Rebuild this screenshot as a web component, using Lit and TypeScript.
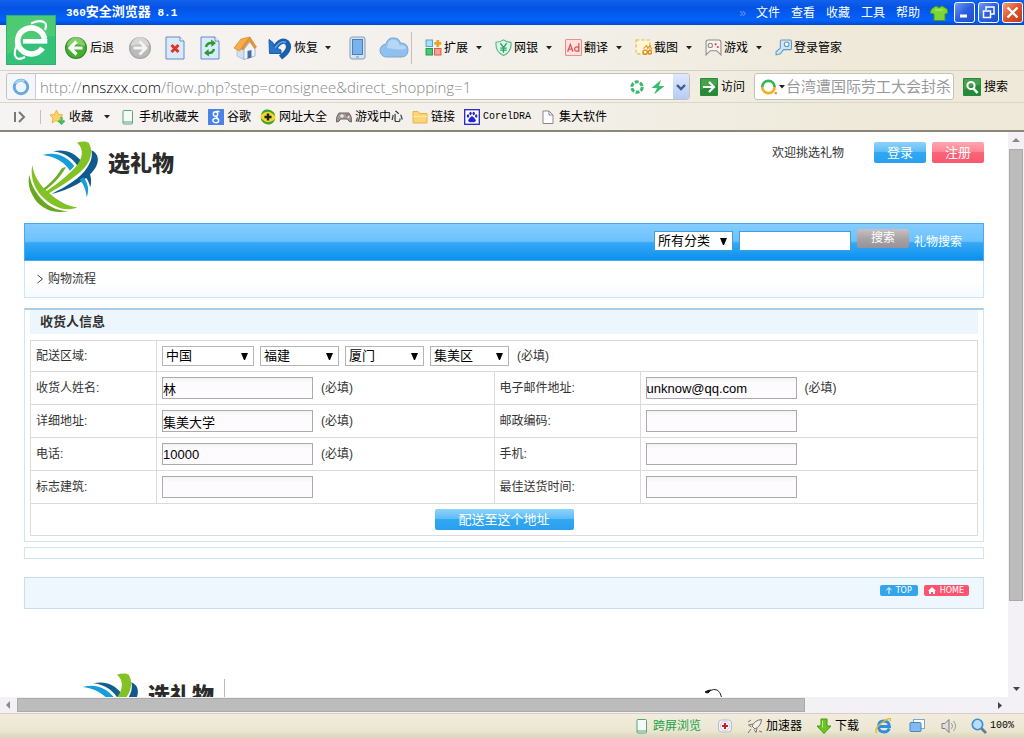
import { LitElement, html, css, svg, nothing } from "lit";
import { customElement, property } from "lit/decorators.js";

const glyphs: Record<string, unknown> = {
  e: svg`<rect width="50" height="50" fill="#2fb36c"/><rect x="1" y="1" width="48" height="48" fill="#34c27a"/><path d="M1 1h48v20Q22 22 1 40Z" fill="#5fd06f" opacity=".6"/>
    <path d="M38.500 24A13.500 13 0 1 0 36.500 33" fill="none" stroke="#fff" stroke-width="5.600"/><path d="M17 26.300H41.300" stroke="#fff" stroke-width="4.600"/>
    <path d="M11 30C6 41 10 47 19 42M25 8.500C35 4 43 6 39 15" fill="none" stroke="#fff" stroke-width="2.200"/>`,
  back: svg`<circle cx="12" cy="12" r="11" fill="#2b8f22"/><circle cx="12" cy="12" r="9.800" fill="#48ad33"/><path d="M3 10a9 9 0 0 1 18 0q-9-3-18 0" fill="#a0dc82" opacity=".7"/><path d="M12.500 5.500L6 12l6.500 6.500M6.500 12H18.500" fill="none" stroke="#fff" stroke-width="3.200"/>`,
  forward: svg`<circle cx="12" cy="12" r="11" fill="#a4a4a4"/><circle cx="12" cy="12" r="9.800" fill="#bababa"/><path d="M3 10a9 9 0 0 1 18 0q-9-3-18 0" fill="#ddd" opacity=".8"/><path d="M11.500 5.500L18 12l-6.500 6.500M17.500 12H5.500" fill="none" stroke="#f4f4f4" stroke-width="2.800"/>`,
  stop: svg`<path d="M3 1h14l4 4v18H3Z" fill="#dbeafb" stroke="#5d8ec6"/><path d="M17 1v4h4" fill="#fff" stroke="#5d8ec6"/><path d="M8.500 9l7 7M15.500 9l-7 7" stroke="#e03322" stroke-width="3"/>`,
  refresh: svg`<path d="M3 1h14l4 4v18H3Z" fill="#dbeafb" stroke="#5d8ec6"/><path d="M17 1v4h4" fill="#fff" stroke="#5d8ec6"/><path d="M8 11q1-4 5-4h1M16 13q-1 4-5 4h-1" fill="none" stroke="#2c9b31" stroke-width="2.500"/><path d="M13 3.500l5 3.500-4.500 4ZM11 20.500L6 17l4.500-4Z" fill="#2c9b31"/>`,
  home: svg`<path d="M4 12v8l7 3.500 1-10L8 6Z" fill="#d5e0ef" stroke="#9fb5cf" stroke-width=".7"/><path d="M11 23.500l11-3.500v-8l-5-6-6 7Z" fill="#eef4fb" stroke="#8aa5c8" stroke-width=".7"/><path d="M1 12L8 3l9-2-7 9-3.500 5Z" fill="#f8ac45" stroke="#d0852c" stroke-width=".7"/><path d="M17 1l6.500 10-2 1.500L16.500 5 10 14l-2-1Z" fill="#e9953a" stroke="#c97a22" stroke-width=".5"/><path d="M14.500 15l4-1v7.500l-4 1.200Z" fill="#4c6ea8"/>`,
  undo: svg`<path d="M6 13Q13 2 19 6.500Q24 13 12.500 21.500" fill="none" stroke="#1a5fae" stroke-width="5.200"/><path d="M1 3.500l4 3 1 4.500 7 3v3.500H1.500Z" fill="#2874c9" stroke="#1a5fae"/><path d="M7 12Q13 3.500 18 6.500" fill="none" stroke="#63a6e8" stroke-width="1.500"/>`,
  phone: svg`<rect x="4" y="1" width="15" height="22" rx="2" fill="#d5e4f4" stroke="#809dbb"/><rect x="6.500" y="3.500" width="10" height="15" fill="#79b2ee" stroke="#4c7eb8"/><path d="M10 21h3" stroke="#7892ad"/>`,
  cloud: svg`<path d="M8 21a6.500 6.500 0 0 1-1-13Q9 1 15 2q5 0 6.500 5Q29 7 29 14t-7 7Z" fill="#8fc1ef" stroke="#78a6d4"/><path d="M8 12q0-9 7-8.500q5 1 5.500 6q5-1 7 3q-8 2-19.500-.5" fill="#b5d7f6"/>`,
  ext: svg`<path d="M1 1h6v6H1Z" fill="#a9def5" stroke="#48a9d4"/><path d="M1 9h6v6H1Z" fill="#46c974" stroke="#249a4d"/><path d="M9 9h6v6H9Z" fill="#fba299" stroke="#e4574d"/><path d="M12 1v6.500M8.800 4.200h6.500" stroke="#f2a31d" stroke-width="2.600"/>`,
  bank: svg`<path d="M8 .8Q11 3 15 3q1 9-7 12.500Q0 12 1 3Q5 3 8 .8Z" fill="#e1f6e9" stroke="#45b67b"/><path d="M5 4l3 4 3-4M8 8v5M5 8.500h6M5 10.500h6" fill="none" stroke="#2aa565" stroke-width="1.200"/>`,
  trans: svg`<rect x=".5" y=".5" width="15" height="15" rx="1" fill="#ffe3e1" stroke="#ee8d8a"/><path d="M2.500 12l2.500-7 2.500 7M3.500 9.500h3M13 4v8M13 9a2 2 0 1 0 0 1" fill="none" stroke="#de5552" stroke-width="1.200"/>`,
  shot: svg`<rect x="1" y="1" width="13" height="13" fill="#fff6d7" stroke="#e0b64c" stroke-dasharray="3 2"/><path d="M8 9l3-3 1 3 2-3 2 4" fill="none" stroke="#dd9a22"/><circle cx="9.500" cy="12.500" r="2" fill="none" stroke="#df8b1c" stroke-width="1.300"/><circle cx="14" cy="12.500" r="1.700" fill="none" stroke="#df8b1c" stroke-width="1.300"/>`,
  game: svg`<path d="M1 15V3q0-2 2-2h10q2 0 2 2v12l-4-4H5Z" fill="#f7f4f2" stroke="#938a88"/><circle cx="5" cy="6" r="2" fill="none" stroke="#938a88"/><circle cx="10" cy="5" r="1" fill="#d44"/><circle cx="12" cy="7.500" r="1" fill="#d44"/>`,
  key: svg`<path d="M1 15v-3l4-3.500V2q0-1 1-1h8.500q1 0 1 1v7q0 1-1 1H8l-3 4Z" fill="#cde7f8" stroke="#6799c0"/><circle cx="11" cy="5" r="2.200" fill="#fff" stroke="#6799c0"/>`,
  ring: svg`<circle cx="8" cy="8" r="6" fill="#eef6fd" stroke="#69a7df" stroke-width="2.600"/><path d="M3 5a6 6 0 0 1 8-2" fill="none" stroke="#a8d1f4" stroke-width="2"/>`,
  lens: svg`<circle cx="8" cy="8" r="5.200" fill="none" stroke="#3cb86d" stroke-width="3" stroke-dasharray="4 1.400"/>`,
  bolt: svg`<path d="M11 1L1.500 9H7l-3 6.500L14.500 7H9Z" fill="#37bd6c"/>`,
  chev: svg`<path d="M4 6l4 4 4-4" fill="none" stroke="#3f5c8e" stroke-width="2.400"/>`,
  go: svg`<rect width="18" height="18" rx="1" fill="#27893a"/><path d="M1 1h16v6q-9 0-16 5Z" fill="#5bb059" opacity=".6"/><path d="M3 9h11M9 4l5 5-5 5" fill="none" stroke="#fff" stroke-width="2.200"/>`,
  find: svg`<rect width="18" height="18" rx="1" fill="#27893a"/><path d="M1 1h16v6q-9 0-16 5Z" fill="#5bb059" opacity=".6"/><circle cx="8" cy="7.500" r="3.600" fill="none" stroke="#fff" stroke-width="2"/><path d="M10.500 10.500l4 4.500" stroke="#fff" stroke-width="2.600"/>`,
  so: svg`<path d="M2 8a5.500 5.500 0 0 1 11 0" fill="none" stroke="#35b558" stroke-width="2.400"/><path d="M2 8a5.500 5.500 0 0 0 11 0" fill="none" stroke="#f6ad27" stroke-width="2.400"/><path d="M13 12.500h2v2h-2Z" fill="#f08a28"/>`,
  side: svg`<path d="M3 3v10" stroke="#777" stroke-width="2"/><path d="M7 3l5 5-5 5" fill="none" stroke="#777" stroke-width="2"/>`,
  star: svg`<path d="M6.500 1l2 4.500 4.500.5-3.500 3 1 5-4.500-2.500L2 14l1-5L0 6l4.500-.5Z" fill="#fcd365" stroke="#edb73d"/><path d="M11.500 8v6M8.500 11.500l3 3 3-3" fill="none" stroke="#49b862" stroke-width="2.200"/>`,
  mob: svg`<rect x="3" y="1.500" width="9.500" height="13.500" rx="1" fill="#f4fbf6" stroke="#55a57b"/><path d="M3 13h9" stroke="#55a57b"/>`,
  goog: svg`<rect width="16" height="16" fill="#4a83e8"/><circle cx="7.500" cy="5" r="2.200" fill="none" stroke="#fff" stroke-width="1.400"/><ellipse cx="7.800" cy="11.500" rx="2.900" ry="2.200" fill="none" stroke="#fff" stroke-width="1.400"/><path d="M8 2.500h3.500M8 7l1.500 2" fill="none" stroke="#fff" stroke-width="1.300"/>`,
  nav: svg`<circle cx="8" cy="8" r="7.500" fill="#f4d927"/><path d="M1 6Q3-1 10 1q5 2 5 6Q8-1 1 6ZM15 10q-2 7-9 5Q1 13 1 9q7 8 14 1Z" fill="#3aa23d"/><path d="M8 4.500v7M4.500 8h7" stroke="#222" stroke-width="2.400"/>`,
  pad: svg`<path d="M3 4h10q3 3 2.500 9-3 0-4-3h-7q-1 3-4 3Q0 7 3 4Z" fill="#a09b99" stroke="#666"/><path d="M4 7h4M6 5v4" stroke="#fff"/><circle cx="11" cy="6" r="1" fill="#d44"/><circle cx="12.500" cy="8" r="1" fill="#eee"/>`,
  folder: svg`<path d="M1 2.500h5l2 2h7V14H1Z" fill="#fbd673" stroke="#e5b54a"/><path d="M1.500 7.500H15" stroke="#fdeab2"/>`,
  paw: svg`<rect x=".7" y=".7" width="14.600" height="14.600" fill="#fff" stroke="#2323cf" stroke-width="1.300"/><path d="M8 7q3 2 4 4.500-1 2.500-4 1.500-3 1-4-1.500Q5 9 8 7Z" fill="#2323cf"/><ellipse cx="4" cy="7" rx="1.200" ry="1.700" fill="#2323cf"/><ellipse cx="6.500" cy="4.500" rx="1.200" ry="1.800" fill="#2323cf"/><ellipse cx="9.700" cy="4.500" rx="1.200" ry="1.800" fill="#2323cf"/><ellipse cx="12.200" cy="7" rx="1.200" ry="1.700" fill="#2323cf"/>`,
  doc: svg`<path d="M3 2h6l4 4v8.500H3Z" fill="#fff" stroke="#888"/><path d="M9 2v4h4" fill="none" stroke="#888"/>`,
  shirt: svg`<path d="M6 2q3 3 6 0l5 3 1 4-3 1v6.500H4V10L0 9l1.500-4Z" fill="#7dd636" stroke="#3f9b25"/><path d="M5 6h8" stroke="#b6f07c"/>`,
  med: svg`<rect x="1.500" y="2" width="13" height="12" rx="3" fill="#eef2f8" stroke="#b3bed0"/><circle cx="8" cy="8" r="4.500" fill="#fff" stroke="#dcc"/><path d="M8 5v6M5 8h6" stroke="#cb1d2c" stroke-width="2.200"/>`,
  rocket: svg`<path d="M14.500 1.500Q8 2 5 8l3 3q6-3 6.500-9.500ZM6 6L1.500 7l3 2M10 10l-1 4.500-2-3M4 11l-3 4M1 4l3-2M12 13l3 1" fill="#f4f0e4" stroke="#77736a"/>`,
  down: svg`<path d="M5 1h6v7h4L8 15.500 1 8h4Z" fill="#6cc423" stroke="#429a14"/><path d="M6.500 2.500v7" stroke="#baf07c"/>`,
  ie: svg`<path d="M4.500 8.500h10Q14 3 8.800 3 3.500 3.200 3.500 8.500T9 14q4 0 5.300-3.500" fill="none" stroke="#2e8fe0" stroke-width="2.800"/><path d="M2 15Q-2 11 8 4t7-1" fill="none" stroke="#efb624" stroke-width="1.500"/>`,
  wins: svg`<rect x="4.500" y="1.500" width="11" height="9" fill="#fff" stroke="#83a6cc"/><rect x="1" y="4.500" width="11" height="9" rx="1" fill="#7fbaf2" stroke="#4d84bd"/>`,
  speak: svg`<path d="M1 5.500h3l4-4v13l-4-4H1Z" fill="#dedede" stroke="#7b7b7b"/><path d="M10.500 5q2 3 0 6M12.500 3q4 5 0 10" fill="none" stroke="#999"/>`,
  zoom: svg`<circle cx="6.500" cy="6.500" r="5.200" fill="#b8defb" stroke="#3c8ed6" stroke-width="1.600"/><path d="M10.500 10.500l4.500 4.500" stroke="#6c7a88" stroke-width="2.600"/>`,
  tri: svg`<path d="M1 2h6L4 5.500Z" fill="#222"/>`,
};

const icon = (name: string, w = 16, h = w, vb = `0 0 ${w} ${h}`) =>
  html`<svg class="ico" width=${w} height=${h} viewBox=${vb} aria-hidden="true">${glyphs[name]}</svg>`;

@customElement("gift-logo")
export class GiftLogo extends LitElement {
  static styles = css`
    :host { display: flex; gap: 8px; }
    .name { margin: 11px 0 0; font-size: 22px; line-height: 26px; font-weight: 900; color: #2b2b2b; white-space: nowrap; }
  `;
  render() {
    return html`
      <svg width="72" height="73" viewBox="24 18 216 219" aria-hidden="true">
        <path d="M100 52C132 44 164 54 184 82L174 98C156 70 132 56 100 52Z" fill="#11608f" />
        <path d="M68 63C104 52 140 64 163 96L150 110C132 82 104 68 68 63Z" fill="#159fda" />
        <path d="M124 104Q131 98 138 100C120 132 98 152 73 171L66 166C92 148 110 128 124 104Z" fill="#6fae26" />
        <path d="M171 26C184 21 198 21 206 26C220 48 213 78 196 98C172 126 130 152 80 182L70 178C102 156 140 128 164 102C190 74 193 44 171 26Z" fill="#83c225" />
        <path d="M214 49C236 58 239 80 226 102C202 140 148 168 94 180C140 158 182 132 202 100C214 82 218 66 214 49Z" fill="#10598c" />
        <path d="M188 120L203 106C213 122 216 142 211 160C207 142 200 130 188 120Z" fill="#10598c" />
        <path d="M179 137L191 130C205 150 208 170 200 190C198 168 192 152 179 137Z" fill="#159fda" />
        <path d="M37 93C42 128 60 154 88 178C114 200 142 218 172 220C142 234 108 222 82 202C48 176 28 136 37 93Z" fill="#83c225" />
        <path d="M28 122C34 158 52 184 76 206C96 222 118 231 146 231C104 241 68 226 46 198C28 172 22 148 28 122Z" fill="#68a820" />
      </svg>
      <p class="name">选礼物</p>
    `;
  }
}

@customElement("app-root")
export class AppRoot extends LitElement {
  @property() address = "http://nnszxx.com/flow.php?step=consignee&direct_shopping=1";

  static styles = css`
    :host {
      display: grid; grid-template-rows: auto minmax(0, 1fr) auto; height: 100vh; overflow: hidden;
      font: 12px/16px "Liberation Sans", "Noto Sans CJK SC", sans-serif; color: #000; background: #fff;
    }
    * { box-sizing: border-box; }
    button, input, select { font: inherit; color: inherit; margin: 0; }
    button { border: 0; padding: 0; background: none; white-space: nowrap; }
    a { color: inherit; text-decoration: none; }
    .ico { display: block; flex: none; }
    .row { display: flex; align-items: center; }
    .half { font-family: "Liberation Mono", monospace; font-size: 10px; }

    .chrome { position: relative; background: linear-gradient(90deg, #f6f3f3, #f3f0ea 55%, #eee9d8 85%); border-bottom: 2px solid #8b8778; }
    .title { height: 25px; padding: 0 1px 0 66px; color: #fff; background: linear-gradient(#1361ea, #0453e4 30%, #0462fb 80%, #0049d0); }
    .title h1 { flex: 1; margin: 0; font-size: 13px; line-height: 25px; font-weight: 700; }
    .title .half { font-size: 11px; white-space: pre; }
    .menu { gap: 11px; margin-right: 10px; }
    .more { color: #5f96f4; margin-right: 10px; }
    .win { display: grid; place-items: center; width: 21px; height: 21px; margin-left: 3px; border: 1px solid #fff; border-radius: 3px; background: linear-gradient(135deg, #6f9af5, #2a5fe0 50%, #2250c4); }
    .win.first { margin-left: 6px; }
    .win.close { background: linear-gradient(135deg, #f0a080, #e0532b 50%, #c33a14); }
    .brand { position: absolute; left: 6px; top: 15px; }

    .tools { height: 45px; padding-left: 64px; }
    .tools .big { margin-right: 11px; }
    .tools .cloud { margin-left: -2px; }
    .tools .sep { width: 1px; height: 32px; margin: 0 13px 0 2px; background: #c5c0b4; }
    .tool { display: flex; align-items: center; gap: 2px; width: 70px; }
    .tool .ico:last-child:not(:first-child) { margin-left: 5px; }
    .tool.wide { width: auto; }
    .undo { display: flex; align-items: center; gap: 2px; margin-right: 14px; }
    .undo .arrow { margin-left: 4px; }

    .addr { height: 32px; padding: 0 16px 0 6px; border-top: 1px solid #d6d1c6; }
    .field { display: flex; align-items: center; height: 27px; border: 1px solid #c6c2ba; border-radius: 3px; background: #fff; overflow: hidden; }
    .url { flex: 1; min-width: 0; margin-right: 10px; }
    .id { display: grid; place-items: center; width: 29px; height: 25px; margin-right: 4px; border-right: 1px solid #ccc; background: #f3f7fc; }
    .text { flex: 1; min-width: 0; font: 300 15px/24px "Open Sans", sans-serif; color: #888; white-space: nowrap; outline: 0; overflow: hidden; }
    .text b { font-weight: 300; color: #000; }
    .url .bolt { margin: 0 7px 0 5px; }
    .drop { width: 16px; height: 25px; background: linear-gradient(#dfe9fd, #b6cbf6); display: grid; place-items: center; }
    .act { display: flex; align-items: center; gap: 3px; }
    .find { width: 200px; margin: 0 9px; padding-left: 5px; }
    .find input { flex: 1; min-width: 0; border: 0; padding: 0; outline: 0; background: none; font-size: 15px; line-height: 24px; }
    .find input::placeholder { color: #999; opacity: 1; }

    .favs { height: 28px; padding-left: 12px; gap: 9px; border-top: 1px solid #dcd7cb; }
    .favs .sep { width: 1px; height: 14px; background: #c5c0b4; }
    .fav { display: flex; align-items: center; gap: 3px; white-space: nowrap; }
    .side { margin-right: 3px; }
    .small { width: 9px; display: grid; place-items: center; }

    .frame { display: grid; grid-template: minmax(0, 1fr) 16px / minmax(0, 1fr) 16px; background: #f3f1f6; }
    .page { overflow: hidden; background: #fff; padding: 0 24px; color: #333; }
    .vbar, .hbar { display: flex; align-items: center; justify-content: space-between; }
    .vbar { flex-direction: column; }
    .end { width: 17px; height: 17px; display: grid; place-items: center; }
    .hbar .end { height: 16px; }
    .thumb { background: #bdbcbd; border: 1px solid #aaa; }
    .vbar .thumb { width: 14px; flex: 0 0 80%; }
    .hbar .thumb { height: 14px; flex: 0 0 78.2%; }
    .space { flex: 1; }

    .head { display: flex; justify-content: space-between; align-items: flex-start; height: 91px; padding: 8px 0 0 4px; }
    .user { gap: 6px; padding-top: 2px; }
    .user span { margin-right: 24px; }
    .btn { width: 52px; height: 21px; border-radius: 2px; color: #fff; font-size: 13px; line-height: 21px; background: linear-gradient(#8fd2fb, #5fbdf8 45%, #30a8f2 50%, #2a9ff0); }
    .btn.red { background: linear-gradient(#ffa6b0, #fd8794 45%, #fb6578 50%, #f95770); }
    .btn.gray { height: 19px; line-height: 19px; margin-bottom: 5px; font-size: 12px; background: linear-gradient(#cbbfc2, #a9a3a8 50%, #989298); }
    .btn.send { width: 139px; }

    .bar { display: flex; align-items: center; justify-content: flex-end; height: 38px; padding: 0 21px 2px 0; border: 1px solid #4aa9e6; background: linear-gradient(#84cdff, #6cc1fc 48%, #36a8f6 52%, #0a90ee); color: #fff; }
    .bar > * { margin-left: 6px; }
    .bar .note { margin-left: 5px; padding-top: 1px; }
    select { appearance: none; height: 20px; width: 79px; padding: 0 16px 0 3px; border: 1px solid #b5b5b5; border-radius: 0; color: #000; font-size: 13px; line-height: 18px;
      background: #fff url("data:image/svg+xml,%3Csvg xmlns='http://www.w3.org/2000/svg' width='7' height='7'%3E%3Cpath d='M0 0h7L4 7H3z'/%3E%3C/svg%3E") no-repeat right 5px center; }
    select.wide { width: 92px; }
    .bar select { border-color: #3f9fdc; }
    .bar input { width: 112px; height: 20px; border: 1px solid #3f9fdc; background: #fff; color: #000; font-size: 13px; padding: 0 2px; }

    .crumb { display: flex; align-items: center; gap: 4px; height: 37px; padding: 0 0 0 11px; border: 1px solid #cfe6f4; border-top: 0; background: linear-gradient(#fff 50%, #f7fbff); }
    .box { margin-top: 10px; padding-bottom: 5px; border: 1px solid #cfe6f4; border-top: 2px solid #a9cde6; }
    .box h2 { margin: 0 5px 6px 5px; padding: 0 10px; font-size: 13px; line-height: 24px; font-weight: 700; background: #edf6fd; }
    .grid { padding: 0 5px; }
    table { width: 100%; table-layout: fixed; border-collapse: collapse; }
    .lab { width: 126px; }
    .lab2 { width: 146px; }
    th, td { padding: 5px; border: 1px solid #dbdbdb; text-align: left; font-weight: 400; }
    td .row { gap: 6px; }
    td input { width: 151px; height: 22px; padding: 0; border: 1px solid #ababab; background: linear-gradient(#f4f2f5, #fdfbfd 5px); color: #000; font-size: 13px; }
    .must { margin-left: 2px; }
    .center { justify-content: center; }
    .strip { height: 12px; margin-top: 5px; border: 1px solid #cfe6f4; }
    .foot { display: flex; justify-content: flex-end; gap: 6px; height: 32px; margin-top: 18px; padding: 7px 14px 0 0; border: 1px solid #c6e0f0; background: #eef7fe; }
    .tag { display: flex; align-items: center; gap: 4px; height: 11px; padding: 0 6px; border-radius: 2px; color: #fff; background: #34a5ea; font: 8px/11px "DejaVu Sans", sans-serif; }
    .tag.red { padding: 0 5px 0 4px; background: #fc5470; }
    .below { display: flex; align-items: flex-start; margin-top: 63px; padding-left: 44px; }
    .rule { width: 1px; height: 60px; margin: 7px 0 0 10px; background: #bbb; }
    .curl { margin: 16px 0 0 479px; }

    .status { display: flex; align-items: center; justify-content: flex-end; height: 25px; padding-right: 10px; border-top: 1px solid #d5cfc8; background: linear-gradient(#f1ecdd, #ece7d2 70%, #d9d3ba); }
    .status .fav { margin-left: 16px; }
    .status .first { color: #16a34a; margin: 0; }
    .status .lone { margin-left: 18px; }
    .status .mid { margin-left: 14px; }
  `;

  private splitAddress() {
    const m = /^(\w+:\/\/)([^/]+)(.*)$/.exec(this.address)!;
    return html`<span>${m[1]}</span><b>${m[2]}</b><span>${m[3]}</span>`;
  }

  private entry(id: string, label: string, value: string, must: boolean) {
    return html`
      <th scope="row"><label for=${id}>${label}:</label></th>
      <td><div class="row"><input id=${id} type="text" .value=${value} />${must ? html`<span class="must">(必填)</span>` : nothing}</div></td>`;
  }

  render() {
    const arrow = html`<svg class="ico arrow" width="8" height="8" viewBox="0 0 8 8" aria-hidden="true">${glyphs.tri}</svg>`;
    const tools = [["ext", "扩展"], ["bank", "网银"], ["trans", "翻译"], ["shot", "截图"], ["game", "游戏"]];
    const favs = [["mob", "手机收藏夹"], ["goog", "谷歌"], ["nav", "网址大全"], ["pad", "游戏中心"], ["folder", "链接"], ["paw", "CorelDRA"], ["doc", "集大软件"]];
    const region = ["中国", "福建", "厦门", "集美区"];
    const regionNames = ["国家", "省份", "城市", "区县"];
    const rows: [string, string, boolean, string, string, boolean][] = [
      ["收货人姓名", "林", true, "电子邮件地址", "unknow@qq.com", true],
      ["详细地址", "集美大学", true, "邮政编码", "", false],
      ["电话", "10000", true, "手机", "", false],
      ["标志建筑", "", false, "最佳送货时间", "", false],
    ];
    const end = (d: string, c: string) => html`<span class="end"><svg width="9" height="9" viewBox="0 0 9 9" aria-hidden="true"><path d=${d} fill=${c} /></svg></span>`;

    return html`
      <header class="chrome">
        <div class="row title">
          <h1><span class="half">360</span>安全浏览器<span class="half"> 8.1</span></h1>
          <span class="more">»</span>
          <nav class="row menu">${["文件", "查看", "收藏", "工具", "帮助"].map((t) => html`<button>${t}</button>`)}</nav>
          ${icon("shirt", 18)}
          <button class="win first" aria-label="最小化"><svg width="17" height="17" viewBox="0 0 17 17"><path d="M4 12h7" stroke="#fff" stroke-width="3" /></svg></button>
          <button class="win" aria-label="还原"><svg width="17" height="17" viewBox="0 0 17 17"><path d="M6 6V3h8v7h-3M3.500 7h7v6.500h-7Z" fill="none" stroke="#fff" stroke-width="1.500" /></svg></button>
          <button class="win close" aria-label="关闭"><svg width="17" height="17" viewBox="0 0 17 17"><path d="M3.500 3.500l10 10M13.500 3.500l-10 10" stroke="#fff" stroke-width="2.400" /></svg></button>
        </div>
        <div class="brand">${icon("e", 50)}</div>

        <div class="row tools">
          <button class="undo">${icon("back", 24)}<span>后退</span></button>
          ${["forward", "stop", "refresh", "home"].map((n) => html`<button class="big" aria-label=${n}>${icon(n, 24)}</button>`)}
          <button class="undo">${icon("undo", 24)}<span>恢复</span>${arrow}</button>
          <button class="big" aria-label="手机">${icon("phone", 24)}</button>
          <button class="cloud" aria-label="云">${icon("cloud", 30, 24)}</button>
          <span class="sep"></span>
          ${tools.map(([n, t]) => html`<button class="tool">${icon(n, 17, 17, "0 0 16 16")}<span>${t}</span>${arrow}</button>`)}
          <button class="tool wide">${icon("key", 17, 17, "0 0 16 16")}<span>登录管家</span></button>
        </div>

        <div class="row addr">
          <div class="field url">
            <span class="id">${icon("ring", 18, 18, "0 0 16 16")}</span>
            <div class="text" role="textbox" contenteditable="true" spellcheck="false" aria-label="地址">${this.splitAddress()}</div>
            ${icon("lens")}<span class="bolt">${icon("bolt")}</span>
            <button class="drop" aria-label="历史">${icon("chev")}</button>
          </div>
          <button class="act">${icon("go", 18)}<span>访问</span></button>
          <div class="field find">${icon("so", 18, 18, "0 0 16 16")}${arrow}<input type="text" aria-label="网页搜索" placeholder="台湾遭国际劳工大会封杀" /></div>
          <button class="act">${icon("find", 18)}<span>搜索</span></button>
        </div>

        <nav class="row favs">
          <button class="side" aria-label="侧栏">${icon("side")}</button>
          <span class="sep"></span>
          <button class="fav">${icon("star")}<span>收藏</span></button>
          <span class="small">${arrow}</span>
          ${favs.map(([n, t]) => html`<a class="fav" href="#">${icon(n)}<span class=${n === "paw" ? "half" : ""}>${t}</span></a>`)}
        </nav>
      </header>

      <div class="frame">
        <main class="page">
          <div class="head">
            <gift-logo></gift-logo>
            <div class="row user">
              <span>欢迎挑选礼物</span>
              <button class="btn">登录</button>
              <button class="btn red">注册</button>
            </div>
          </div>
          <form class="bar">
            <select aria-label="分类"><option>所有分类</option></select>
            <input type="text" aria-label="关键字" />
            <button class="btn gray" type="button">搜索</button>
            <a class="note" href="#">礼物搜索</a>
          </form>
          <div class="crumb">
            <svg width="8" height="10" viewBox="0 0 8 10" aria-hidden="true"><path d="M1.500 1l5 4-5 4" fill="none" stroke="#444" /></svg>
            <span>购物流程</span>
          </div>

          <section class="box">
            <h2>收货人信息</h2>
            <form class="grid">
              <table>
                <colgroup><col class="lab" /><col /><col class="lab2" /><col /></colgroup>
                <tbody>
                  <tr>
                    <th scope="row"><label for="region0">配送区域:</label></th>
                    <td colspan="3"><div class="row">
                      ${region.map((r, i) => html`<select id=${"region" + i} class=${i ? "" : "wide"} aria-label=${regionNames[i]}><option>${r}</option></select>`)}
                      <span class="must">(必填)</span>
                    </div></td>
                  </tr>
                  ${rows.map((r, i) => html`<tr>${this.entry("a" + i, r[0], r[1], r[2])}${this.entry("b" + i, r[3], r[4], r[5])}</tr>`)}
                  <tr><td colspan="4"><div class="row center"><button class="btn send" type="button">配送至这个地址</button></div></td></tr>
                </tbody>
              </table>
            </form>
          </section>
          <div class="strip"></div>
          <div class="foot">
            <a class="tag" href="#"><svg width="6" height="7" viewBox="0 0 6 7"><path d="M3 7V1M.5 3L3 .7 5.500 3" fill="none" stroke="#fff" /></svg>TOP</a>
            <a class="tag red" href="#"><svg width="8" height="7" viewBox="0 0 8 7"><path d="M0 4l4-4 4 4H7v3H5V5H3v2H1V4Z" fill="#fff" /></svg>HOME</a>
          </div>
          <div class="below">
            <gift-logo></gift-logo>
            <span class="rule"></span>
            <svg class="curl" width="20" height="20" viewBox="0 0 20 20" aria-hidden="true"><path d="M1 4q3-2 6-2-2 3-4 3Z" fill="#111" stroke="#111" /><path d="M5 3q10-5 12.500 6" fill="none" stroke="#222" /></svg>
          </div>
        </main>
        <div class="vbar">${end("M0 6h8L4 2Z", "#8a8a8a")}<span class="thumb"></span><span class="space"></span>${end("M1 3h7L4.500 7Z", "#444")}</div>
        <div class="hbar">${end("M6 0v8L2 4Z", "#8a8a8a")}<span class="thumb"></span><span class="space"></span>${end("M3 1v7L7 4.500Z", "#444")}</div>
      </div>

      <footer class="status">
        <button class="fav first">${icon("mob", 16)}<span>跨屏浏览</span></button>
        <button class="fav" aria-label="医生">${icon("med")}</button>
        <button class="fav mid">${icon("rocket")}<span>加速器</span></button>
        <button class="fav mid">${icon("down")}<span>下载</span></button>
        <button class="fav" aria-label="内核">${icon("ie")}</button>
        <button class="fav lone" aria-label="窗口">${icon("wins")}</button>
        <button class="fav" aria-label="声音">${icon("speak")}</button>
        <button class="fav mid">${icon("zoom")}<span class="half">100%</span></button>
      </footer>
    `;
  }
}
